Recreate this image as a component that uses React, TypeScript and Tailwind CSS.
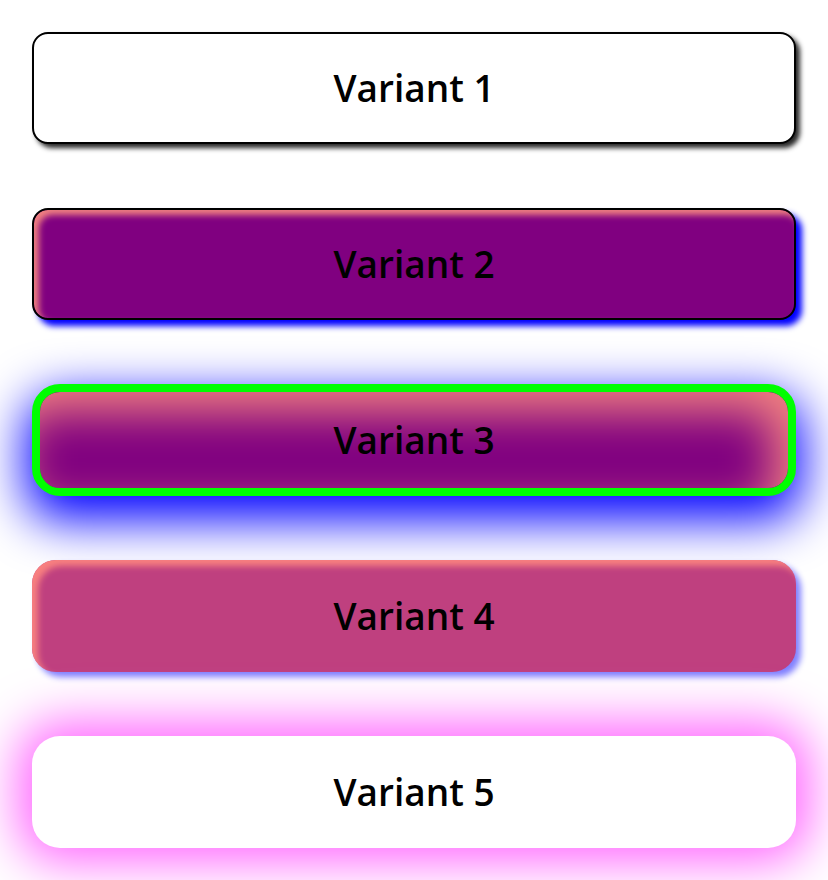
const variants = [
  {
    label: 'Variant 1',
    className:
      'bg-white border-2 border-black rounded-2xl shadow-[4px_4px_5px_rgba(0,0,0,0.85)]',
  },
  {
    label: 'Variant 2',
    className:
      'bg-[#800080] border-2 border-black rounded-2xl shadow-[inset_5px_5px_6px_#f08080,6px_6px_6px_#0000ff]',
  },
  {
    label: 'Variant 3',
    className:
      'bg-[#800080] border-8 border-[#00ff00] rounded-[28px] shadow-[inset_-16px_20px_45px_#f08080,0_18px_50px_6px_#0000ff]',
  },
  {
    label: 'Variant 4',
    className:
      'bg-[#bf407f] rounded-[24px] shadow-[inset_6px_6px_6px_#f88080,5px_5px_6px_#8080ff]',
  },
  {
    label: 'Variant 5',
    className: 'bg-white rounded-[28px] shadow-[0_0_50px_14px_#ff66ff]',
  },
]

export default function App() {
  return (
    <div
      className="min-h-[880px] bg-white px-8 py-8 flex flex-col gap-16"
      style={{ fontFamily: '"Open Sans", "Noto Sans", sans-serif' }}
    >
      {variants.map((v) => (
        <div
          key={v.label}
          className={`h-[112px] flex items-center justify-center text-black text-[37px] font-semibold ${v.className}`}
        >
          {v.label}
        </div>
      ))}
    </div>
  )
}
